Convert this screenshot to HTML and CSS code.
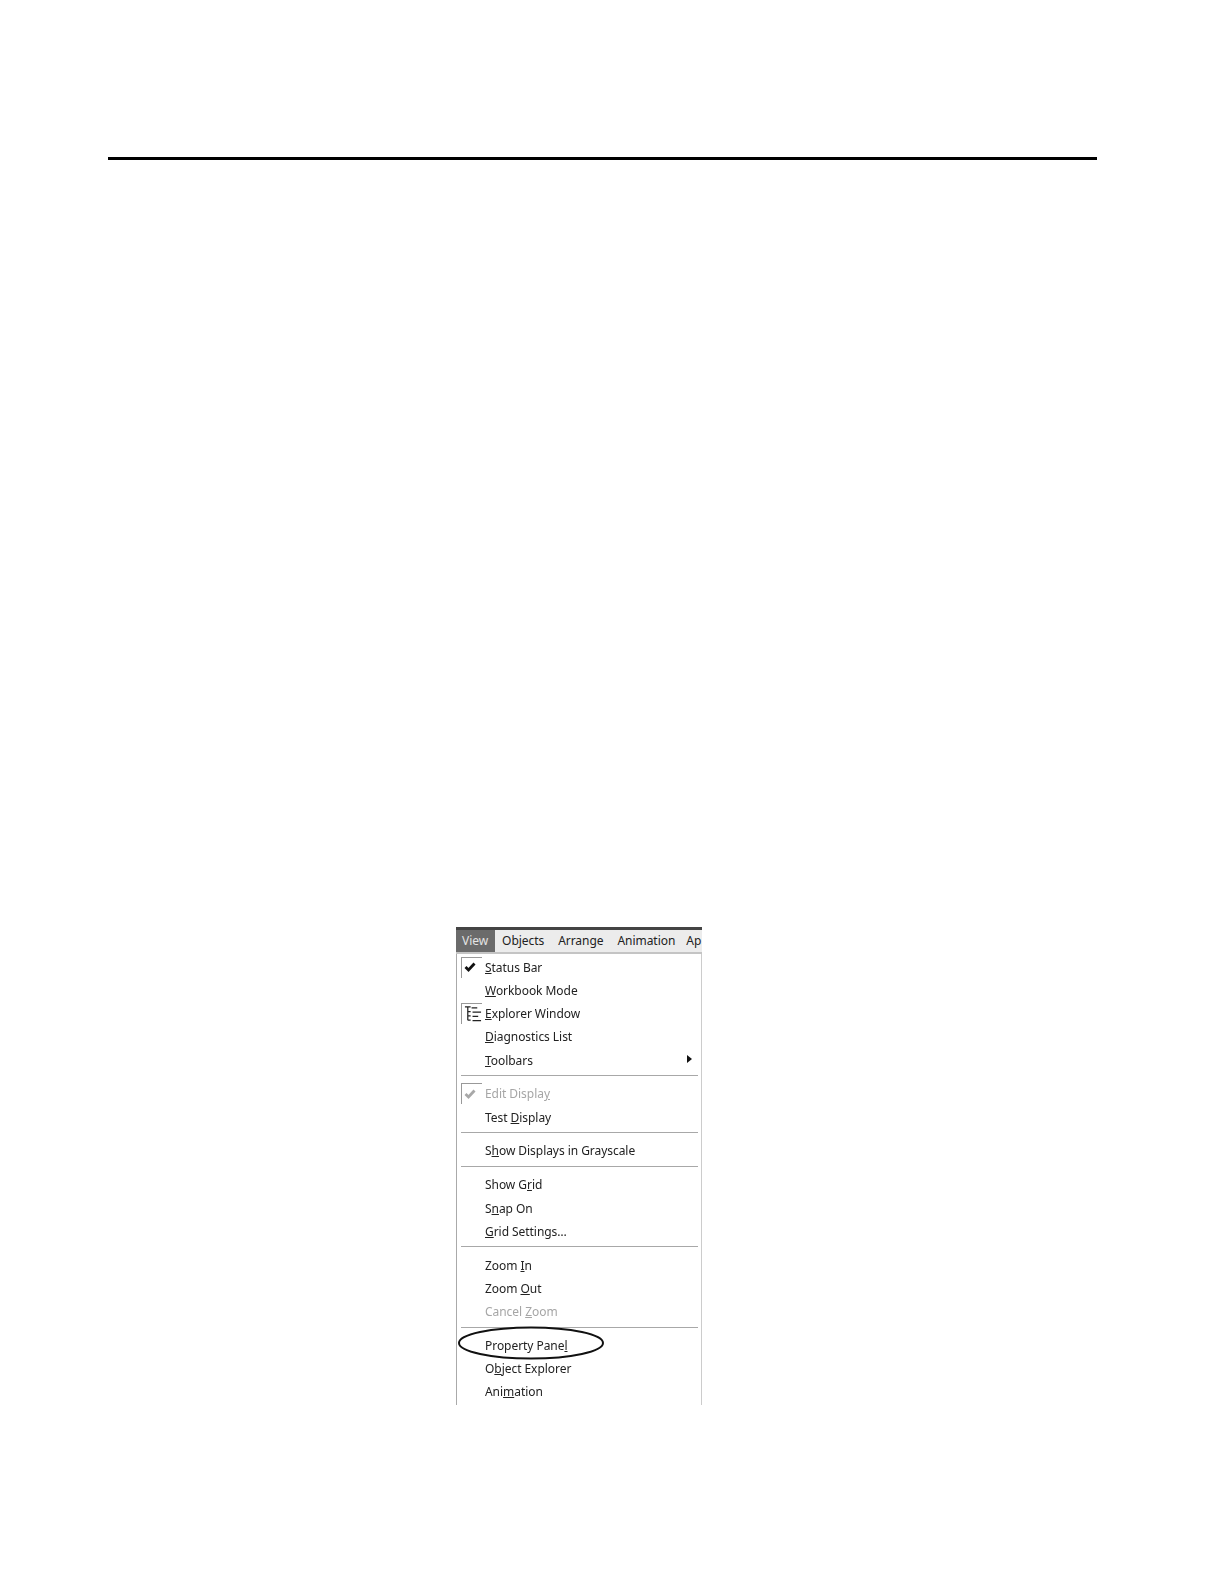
FILE: index.html
```html
<!DOCTYPE html>
<html lang="en">
<head>
  <meta charset="UTF-8" />
  <title>Property Panel</title>
  <link rel="stylesheet" href="styles.css">
</head>
<body>
  <div class="page">
    <div class="top-rule"></div>
    <div class="figure">
      <div class="menu">
        <div class="menubar">
          <span class="bar-item active">View</span>
          <span class="bar-item">Objects</span>
          <span class="bar-item">Arrange</span>
          <span class="bar-item">Animation</span>
          <span class="bar-item">Ap</span>
        </div>
        <div class="items">
          <div class="row">
            <span class="mark">
              <svg width="12" height="11" viewBox="0 0 12 11"><path d="M1.5 5 L4.5 8 L10.5 1.5" fill="none" stroke="#111" stroke-width="2.8"/></svg>
            </span>
            <span><u>S</u>tatus Bar</span>
          </div>
          <div class="row"><span class="mark none"></span><span><u>W</u>orkbook Mode</span></div>
          <div class="row">
            <span class="mark">
              <svg class="tree" width="19" height="18" viewBox="0 0 19 18"><path d="M1 1.5 H7 M4 1.5 V15.5 M4 6.5 H7 M4 11 H7 M4 15.5 H7 M8 2.5 H14 M9 7 H18 M9 11.5 H15 M9 16 H18" fill="none" stroke="#222" stroke-width="1.3"/></svg>
            </span>
            <span><u>E</u>xplorer Window</span>
          </div>
          <div class="row"><span class="mark none"></span><span><u>D</u>iagnostics List</span></div>
          <div class="row">
            <span class="mark none"></span><span><u>T</u>oolbars</span>
            <span class="arrow"></span>
          </div>
          <div class="sep"></div>
          <div class="row disabled">
            <span class="mark">
              <svg width="12" height="11" viewBox="0 0 12 11"><path d="M1.5 5 L4.5 8 L10.5 1.5" fill="none" stroke="#a8a8a8" stroke-width="2.8"/></svg>
            </span>
            <span>Edit Displa<u>y</u></span>
          </div>
          <div class="row"><span class="mark none"></span><span>Test <u>D</u>isplay</span></div>
          <div class="sep"></div>
          <div class="row"><span class="mark none"></span><span>S<u>h</u>ow Displays in Grayscale</span></div>
          <div class="sep"></div>
          <div class="row"><span class="mark none"></span><span>Show G<u>r</u>id</span></div>
          <div class="row"><span class="mark none"></span><span>S<u>n</u>ap On</span></div>
          <div class="row"><span class="mark none"></span><span><u>G</u>rid Settings…</span></div>
          <div class="sep"></div>
          <div class="row"><span class="mark none"></span><span>Zoom <u>I</u>n</span></div>
          <div class="row"><span class="mark none"></span><span>Zoom <u>O</u>ut</span></div>
          <div class="row disabled"><span class="mark none"></span><span>Cancel <u>Z</u>oom</span></div>
          <div class="sep"></div>
          <div class="row"><span class="mark none"></span><span>Property Pane<u>l</u></span></div>
          <div class="row"><span class="mark none"></span><span>O<u>b</u>ject Explorer</span></div>
          <div class="row"><span class="mark none"></span><span>Ani<u>m</u>ation</span></div>
        </div>
      </div>
      <svg class="callout" width="148" height="36" viewBox="0 0 148 36"><ellipse cx="74" cy="18" rx="72" ry="15.5" fill="none" stroke="#111" stroke-width="2"/></svg>
    </div>
  </div>
</body>
</html>
```

FILE: styles.css
```css
html, body {
  margin: 0;
  background: #fff;
}
.page {
  width: 1224px;
  height: 1584px;
  padding-top: 157px;
  box-sizing: border-box;
  overflow: hidden;
}
.top-rule {
  width: 989px;
  height: 3px;
  margin-left: 108px;
  background: #000;
}
.figure {
  position: relative;
  width: 246px;
  margin: 767px 0 0 456px;
  filter: blur(0.35px);
}
.menu {
  width: 246px;
  height: 478px;
  box-sizing: border-box;
  overflow: hidden;
  border-top: 3px solid #444;
  font-family: "Noto Sans", "Liberation Sans", sans-serif;
  font-size: 12px;
  letter-spacing: -0.05px;
  color: #222;
}
.menubar {
  display: flex;
  height: 22px;
  background: #ececec;
  border-bottom: 2px solid #c4c4c4;
  white-space: nowrap;
}
.bar-item {
  display: flex;
  align-items: center;
  padding: 0 7px 2px;
}
.bar-item:last-child {
  margin-left: -3px;
}
.bar-item.active {
  width: 40px;
  box-sizing: border-box;
  padding: 0 7px 2px 6px;
  background: #6b6b6b;
  color: #e4e4e4;
}
.items {
  height: 451px;
  padding: 1.4px 3px 0 4px;
  border-left: 1px solid #aaa;
  border-right: 1px solid #ccc;
}
.row {
  display: flex;
  align-items: center;
  height: 23.25px;
  white-space: nowrap;
}
.row.disabled {
  color: #a6a6a6;
}
.mark {
  display: flex;
  align-items: center;
  justify-content: flex-start;
  width: 21px;
  height: 21px;
  margin-right: 3px;
  padding-left: 2px;
  box-sizing: border-box;
  border-top: 1px solid #999;
  border-left: 1px solid #999;
}
.mark.none {
  border: 0;
}
.arrow {
  margin: 0 6px 3px auto;
  border-left: 5px solid #111;
  border-top: 4px solid transparent;
  border-bottom: 4px solid transparent;
}
.sep {
  height: 1px;
  margin: 3.4px 0 6.2px;
  background: #a8a8a8;
}
.callout {
  position: absolute;
  left: 1px;
  top: 398px;
}
```
